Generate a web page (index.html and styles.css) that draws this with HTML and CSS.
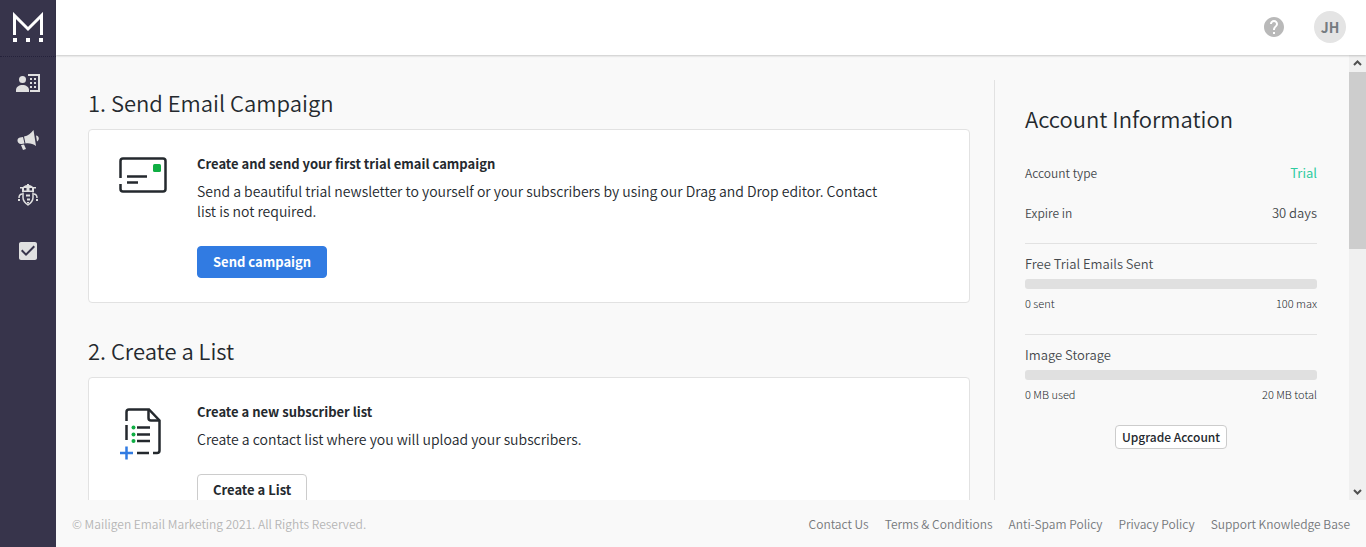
FILE: index.html
```html
<!DOCTYPE html>
<html lang="en">
  <head>
    <meta charset="UTF-8" />
    <meta name="viewport" content="width=device-width, initial-scale=1.0" />
    <title>Mailigen</title>
    <link rel="stylesheet" href="styles.css">
  </head>
  <body>
    <nav class="sidebar">
      <a class="logo" href="#" aria-label="Mailigen">
        <svg width="32" height="32" viewBox="0 0 32 32">
          <path d="M2.500 23V3.500L16 17 29.500 3.500V23" fill="none" stroke="#fff" stroke-width="3" />
          <path d="M1 26h4v4H1zM14 26h4v4h-4zM27 26h4v4h-4z" fill="#fff" />
        </svg>
      </a>
      <a class="nav-item" href="#" aria-label="Contacts">
        <svg width="24" height="24" viewBox="0 0 24 24">
          <circle cx="6.500" cy="8.500" r="3.500" />
          <path d="M0 21v-2c0-3 3-5 6.500-5S13 16 13 19v2z" />
          <path d="M12 3h12v18H14v-2h8V5H12z" />
          <path d="M14 7h2v2h-2zM18 7h2v2h-2zM14 11h2v2h-2zM18 11h2v2h-2zM14 15h2v2h-2zM18 15h2v2h-2z" />
        </svg>
      </a>
      <a class="nav-item" href="#" aria-label="Campaigns">
        <svg width="24" height="24" viewBox="0 0 24 24">
          <path d="M8 9.500C12 9 15 6 17.500 3L20 19c-3-2-6-3-10.500-2.500z" />
          <path d="M7 10l1.500 6.500-3 .5C1 17.500 0 11 4 10.500z" />
          <path d="M5 18l3-.5 2 4.500-3 1z" />
          <path d="M20 8.500c3 .5 4 4 1 6z" />
        </svg>
      </a>
      <a class="nav-item" href="#" aria-label="Automation">
        <svg width="24" height="24" viewBox="0 0 24 24">
          <path d="M11 1h2v1c2 0 3 1 4 2h3v1.500h-2V9H6V5.500H4V4h3c1-1 2-2 4-2zM8 5v2.500h2.500V5zM13.500 5v2.500H16V5z" fill-rule="evenodd" />
          <path d="M7 9.500v5c0 3 2 5.500 5 7.500 3-2 5-4.500 5-7.500v-5" fill="none" stroke="#e0e0e0" stroke-width="1.500" />
          <path d="M10 11.500h4v2h-4zM11 15.500h3v2h-3zM11 19h2v1.500h-2z" />
          <path d="M6.500 11C4 11 3 12.500 3 15M17.500 11c2.500 0 3.500 1.500 3.500 4" fill="none" stroke="#e0e0e0" stroke-width="1.500" />
          <path d="M2 16h2v2H2zM20 16h2v2h-2z" />
        </svg>
      </a>
      <a class="nav-item" href="#" aria-label="Tasks">
        <svg width="24" height="24" viewBox="0 0 24 24">
          <path d="M19 3H5c-1.100 0-2 .9-2 2v14c0 1.100.9 2 2 2h14c1.100 0 2-.9 2-2V5c0-1.100-.9-2-2-2zm-9 14l-5-5 1.400-1.400 3.600 3.600 7.600-7.600L19 8l-9 9z" />
        </svg>
      </a>
    </nav>

    <div class="page">
      <header class="topbar">
        <a class="help" href="#" aria-label="Help">
          <svg width="24" height="24" viewBox="0 0 24 24">
            <path d="M12 2C6.480 2 2 6.480 2 12s4.480 10 10 10 10-4.480 10-10S17.520 2 12 2zm1 17h-2v-2h2v2zm2.070-7.750l-.9.920C13.450 12.900 13 13.500 13 15h-2v-.5c0-1.100.45-2.100 1.170-2.830l1.240-1.260c.37-.36.59-.86.59-1.410 0-1.100-.9-2-2-2s-2 .9-2 2H8c0-2.210 1.790-4 4-4s4 1.790 4 4c0 .88-.36 1.680-.93 2.250z" />
          </svg>
        </a>
        <button class="avatar">JH</button>
      </header>

      <div class="scroller">
        <div class="content">
          <main class="steps">
            <section>
              <h2>1. Send Email Campaign</h2>
              <div class="card">
                <svg class="card-icon" width="48" height="52" viewBox="0 0 48 52">
                  <path d="M1.500 24V7q0-2.500 2.500-2.500h40q2.500 0 2.500 2.500v28q0 2.500-2.500 2.500H4q-2.500 0-2.500-2.500v-5" class="ink" />
                  <path d="M8 22.500h20M8 28.500h11" class="ink" />
                  <rect x="34" y="10" width="8" height="8" rx="1.500" fill="#0fae43" />
                </svg>
                <div class="card-body">
                  <h3>Create and send your first trial email campaign</h3>
                  <p>Send a beautiful trial newsletter to yourself or your subscribers by using our Drag and Drop editor. Contact list is not required.</p>
                  <button class="btn btn-primary">Send campaign</button>
                </div>
              </div>
            </section>
            <section>
              <h2>2. Create a List</h2>
              <div class="card">
                <svg class="card-icon" width="48" height="58" viewBox="0 0 48 58">
                  <path d="M7.500 19V10q0-2.500 2.500-2.500h20l10.500 11V48.500q0 2.500-2.500 2.500h-4M7.500 23v15M18 51h12" class="ink" />
                  <path d="M29.500 8v8q0 2.500 2.500 2.500h8" class="ink" />
                  <path d="M18 25.500h13M18 32.500h13M18 39h13" class="ink" />
                  <g fill="#0fae43">
                    <circle cx="14.500" cy="25.500" r="2" />
                    <circle cx="14.500" cy="32.500" r="2" />
                    <circle cx="14.500" cy="39" r="2" />
                  </g>
                  <path d="M1 51h13M7.500 44.500v13" stroke="#317be2" stroke-width="2.500" fill="none" />
                </svg>
                <div class="card-body">
                  <h3>Create a new subscriber list</h3>
                  <p>Create a contact list where you will upload your subscribers.</p>
                  <button class="btn">Create a List</button>
                </div>
              </div>
            </section>
          </main>

          <aside class="account">
            <h2>Account Information</h2>
            <dl class="facts">
              <div><dt>Account type</dt><dd class="trial">Trial</dd></div>
              <div><dt>Expire in</dt><dd>30 days</dd></div>
            </dl>
            <section class="usage">
              <h4>Free Trial Emails Sent</h4>
              <div class="bar"></div>
              <div class="limits"><span>0 sent</span><span>100 max</span></div>
            </section>
            <section class="usage">
              <h4>Image Storage</h4>
              <div class="bar"></div>
              <div class="limits"><span>0 MB used</span><span>20 MB total</span></div>
            </section>
            <button class="btn btn-small">Upgrade Account</button>
          </aside>
        </div>

        <div class="scrollbar" aria-hidden="true">
          <svg width="17" height="17" viewBox="0 0 17 17"><path d="M5 10l3.500-3.500L12 10" /></svg>
          <div class="track"><div class="thumb"></div></div>
          <svg width="17" height="17" viewBox="0 0 17 17"><path d="M5 7l3.500 3.500L12 7" /></svg>
        </div>
      </div>

      <footer class="footer">
        <span>© Mailigen Email Marketing 2021. All Rights Reserved.</span>
        <div class="footer-links">
          <a href="#">Contact Us</a>
          <a href="#">Terms &amp; Conditions</a>
          <a href="#">Anti-Spam Policy</a>
          <a href="#">Privacy Policy</a>
          <a href="#">Support Knowledge Base</a>
        </div>
      </footer>
    </div>
  </body>
</html>
```
FILE: styles.css
```css
* {
  margin: 0;
  padding: 0;
  box-sizing: border-box;
}

body {
  display: flex;
  height: 100vh;
  overflow: hidden;
  background: #f9f9f9;
  color: #24292e;
  font-family: "Noto Sans CJK SC", sans-serif;
  font-size: 14px;
  font-weight: 350;
  line-height: 20px;
}

a {
  color: inherit;
  text-decoration: none;
}

button {
  font-family: inherit;
  cursor: pointer;
}

/* sidebar */
.sidebar {
  flex: none;
  width: 56px;
  background: #37344b;
}

.logo,
.nav-item {
  display: flex;
  align-items: center;
  justify-content: center;
  height: 56px;
}

.nav-item svg {
  fill: #e0e0e0;
}

.logo + .nav-item {
  height: 55px;
  padding-bottom: 2px;
  border-top: 1px dotted #24213a;
}

/* page */
.page {
  display: flex;
  flex-direction: column;
  flex: 1;
  min-width: 0;
}

.topbar {
  display: flex;
  align-items: center;
  justify-content: flex-end;
  gap: 28px;
  flex: none;
  height: 55px;
  padding: 0 20px 1px;
  background: #fff;
  box-shadow: 0 1px 2px rgba(0, 0, 0, 0.2);
  z-index: 1;
}

.help {
  display: flex;
}

.help svg {
  fill: #b9b9b9;
}

.avatar {
  width: 32px;
  height: 32px;
  border: 0;
  border-radius: 50%;
  background: #e4e4e4;
  color: #757b80;
  font-size: 14px;
  font-weight: 700;
  line-height: 30px;
}

.scroller {
  display: flex;
  flex: 1;
  min-height: 0;
}

.content {
  display: flex;
  flex: 1;
  overflow-y: auto;
  scrollbar-width: none;
}

.steps {
  flex: 1;
  padding: 31px 24px 0 32px;
}

h2 {
  font-size: 22px;
  font-weight: 350;
  line-height: 32px;
}

.card {
  display: flex;
  align-items: flex-start;
  gap: 30px;
  margin: 11px 0 31px;
  padding: 24px 30px;
  border: 1px solid #e2e2e2;
  border-radius: 4px;
  background: #fff;
}

.card-icon {
  flex: none;
}

.ink {
  fill: none;
  stroke: #24292e;
  stroke-width: 2.500;
}

.card-body {
  max-width: 690px;
}

h3 {
  margin-bottom: 7px;
  font-size: 13px;
  font-weight: 700;
}

.btn {
  height: 32px;
  margin-top: 25px;
  padding: 0 15px 1px;
  border: 1px solid #ccc;
  border-radius: 4px;
  background: #fff;
  color: #24292e;
  font-size: 13px;
  font-weight: 700;
  line-height: 20px;
}

.btn-primary {
  border-color: #317be2;
  background: #317be2;
  color: #fff;
}

/* account column */
.account {
  flex: none;
  width: 355px;
  margin-top: 25px;
  padding: 22px 32px 0 30px;
  border-left: 1px solid #e2e2e2;
}

.facts {
  margin: 19px 0 10px;
  color: #45494d;
}

.facts div {
  display: flex;
  justify-content: space-between;
  line-height: 40px;
}

dt {
  font-size: 12px;
}

dd {
  font-size: 13px;
}

.trial {
  color: #2fcca0;
  font-weight: 400;
}

.usage {
  margin-bottom: 21px;
  padding-top: 10px;
  border-top: 1px solid #e2e2e2;
}

h4 {
  color: #45494d;
  font-size: 13px;
  font-weight: 350;
}

.bar {
  height: 10px;
  margin: 5px 0 4px;
  border-radius: 3px;
  background: #e0e0e0;
}

.limits {
  display: flex;
  justify-content: space-between;
  font-size: 11px;
  font-weight: 300;
}

.btn-small {
  display: block;
  height: 24px;
  margin: 0 auto;
  padding: 0 6px 1px;
  font-size: 12px;
  font-weight: 500;
}

/* scrollbar */
.scrollbar {
  display: flex;
  flex-direction: column;
  flex: none;
  width: 17px;
  background: #f0f0f0;
}

.scrollbar path {
  fill: none;
  stroke: #505050;
  stroke-width: 2;
}

.scrollbar svg {
  display: block;
}

.track {
  flex: 1;
}

.thumb {
  height: 43%;
  background: #cdcdcd;
}

/* footer */
.footer {
  display: flex;
  align-items: center;
  justify-content: space-between;
  flex: none;
  height: 47px;
  padding: 1px 16px 0;
  color: #b5b5b5;
  font-size: 12px;
}

.footer-links {
  display: flex;
  gap: 16px;
  color: #74777a;
}
```
